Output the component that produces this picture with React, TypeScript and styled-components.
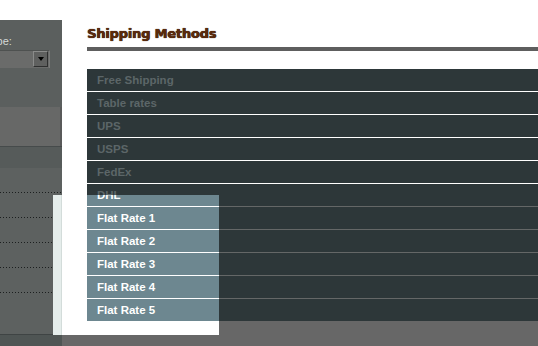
import styled, { createGlobalStyle } from "styled-components";

const GlobalStyle = createGlobalStyle`
    html, body {
        margin: 0;
        padding: 0;
        background: #ffffff;
    }
`

const methods = [
    "Free Shipping",
    "Table rates",
    "UPS",
    "USPS",
    "FedEx",
    "DHL",
    "Flat Rate 1",
    "Flat Rate 2",
    "Flat Rate 3",
    "Flat Rate 4",
    "Flat Rate 5",
]

const StyledPage = styled.div`
    position: relative;
    display: flex;
    flex-direction: row;
    width: 538px;
    height: 346px;
    overflow: hidden;
    font-family: "Liberation Sans", Arial, sans-serif;
`

const StyledSidebar = styled.div`
    display: flex;
    flex-direction: column;
    width: 62px;
    margin-top: 20px;
    overflow: hidden;
`

const StyledSidebarTop = styled.div`
    display: flex;
    flex-direction: column;
    height: 87px;
    padding-top: 15px;
    box-sizing: border-box;
    background-color: #5b5f5e;
`

const StyledLabel = styled.div`
    margin-left: -15px;
    font-size: 11px;
    line-height: 13px;
    color: #d4d8d7;
    white-space: nowrap;
`

const StyledSelect = styled.div`
    display: flex;
    justify-content: flex-end;
    width: 50px;
    height: 18px;
    margin-top: 2px;
    background-color: #6a6b6a;
    border-top: 1px solid #4e5150;
    border-right: 1px solid #7a7b7a;
    box-sizing: border-box;
`

const StyledSelectButton = styled.div`
    display: flex;
    align-items: center;
    justify-content: center;
    width: 15px;
    height: 16px;
    margin: 0 1px 0 0;
    background-color: #5f605f;
    border: 1px solid #8a8b8a;
    border-right-color: #2e2f2f;
    border-bottom-color: #2e2f2f;
    box-sizing: border-box;
`

const StyledArrow = styled.div`
    width: 0;
    height: 0;
    border-left: 3.5px solid transparent;
    border-right: 3.5px solid transparent;
    border-top: 4px solid #000000;
`

const StyledBox = styled.div<{ $height: number; $tone: string }>`
    height: ${p => p.$height}px;
    background-color: ${p => p.$tone};
    border-right: 2px solid #595a5a;
    box-sizing: border-box;
`

const StyledBand = styled.div`
    height: 21px;
    background-color: #565b5a;
    border-top: 1px solid #464b4b;
`

const StyledDotted = styled.div`
    display: flex;
    flex-direction: column;
    flex: 1;
    padding-top: 24px;
    background-color: #5d6160;
`

const StyledDotRow = styled.div`
    height: 25px;
    background-image: repeating-linear-gradient(
        to right,
        #1c1f1f 0,
        #1c1f1f 1px,
        transparent 1px,
        transparent 3px
    );
    background-size: 100% 1px;
    background-repeat: no-repeat;
`

const StyledSidebarFoot = styled.div`
    height: 11px;
    background-color: #4f5554;
    border-top: 1px solid #3f4444;
`

const StyledMain = styled.div`
    display: flex;
    flex-direction: column;
    flex: 1;
`

const StyledContent = styled.div`
    display: flex;
    flex-direction: column;
    padding-left: 25px;
    padding-top: 26px;
    background-color: #ffffff;
`

const StyledTitle = styled.h2`
    margin: 0;
    font-family: "DejaVu Sans", Verdana, sans-serif;
    font-size: 13px;
    line-height: 16px;
    font-weight: bold;
    letter-spacing: -0.2px;
    color: #5c2a0c;
    text-shadow: 0.4px 0 0 #3a1a06, 0 0 1px #2e1404;
`

const StyledRule = styled.div`
    height: 4px;
    margin-top: 5px;
    background-color: #5e5e5e;
`

const StyledList = styled.ul`
    list-style: none;
    margin: 18px 0 0 0;
    padding: 0;
`

const StyledRow = styled.li<{ $line: string; $light?: boolean }>`
    height: 22px;
    padding-left: 10px;
    line-height: 22px;
    font-size: 11.5px;
    font-weight: bold;
    color: ${p => (p.$light ? "#ffffff" : "#5c6668")};
    background-color: ${p => (p.$light ? "#6d8790" : "#2d3739")};
    border-bottom: 1px solid ${p => p.$line};
    &:last-child {
        border-bottom: none;
    }
`

const StyledFiller = styled.div`
    flex: 1;
    background-color: #676767;
`

const StyledOverlay = styled.div`
    position: absolute;
    left: 53px;
    top: 195px;
    width: 166px;
    height: 140px;
    display: flex;
    flex-direction: row;
    background-color: #ffffff;
    overflow: hidden;
`

const StyledOverlayEdge = styled.div`
    width: 8px;
    background-color: #e5edeb;
    border-right: 1px solid #d3dcda;
`

const StyledOverlayList = styled.ul`
    list-style: none;
    flex: 1;
    margin: -11px 0 0 25px;
    padding: 0;
`

export default function App() {
    return (
        <>
            <GlobalStyle />
            <StyledPage>
                <StyledSidebar>
                    <StyledSidebarTop>
                        <StyledLabel>Type:</StyledLabel>
                        <StyledSelect>
                            <StyledSelectButton>
                                <StyledArrow />
                            </StyledSelectButton>
                        </StyledSelect>
                    </StyledSidebarTop>
                    <StyledBox $height={39} $tone="#676867" />
                    <StyledBand />
                    <StyledDotted>
                        {[0, 1, 2, 3, 4].map(i => (
                            <StyledDotRow key={i} />
                        ))}
                    </StyledDotted>
                    <StyledSidebarFoot />
                </StyledSidebar>
                <StyledMain>
                    <StyledContent>
                        <StyledTitle>Shipping Methods</StyledTitle>
                        <StyledRule />
                        <StyledList>
                            {methods.map((m, i) => (
                                <StyledRow key={m} $line={i < 5 ? "#ffffff" : "#646767"}>
                                    {m}
                                </StyledRow>
                            ))}
                        </StyledList>
                    </StyledContent>
                    <StyledFiller />
                </StyledMain>
                <StyledOverlay>
                    <StyledOverlayEdge />
                    <StyledOverlayList>
                        {methods.slice(5).map(m => (
                            <StyledRow key={m} $line="#ffffff" $light>
                                {m}
                            </StyledRow>
                        ))}
                    </StyledOverlayList>
                </StyledOverlay>
            </StyledPage>
        </>
    );
}
